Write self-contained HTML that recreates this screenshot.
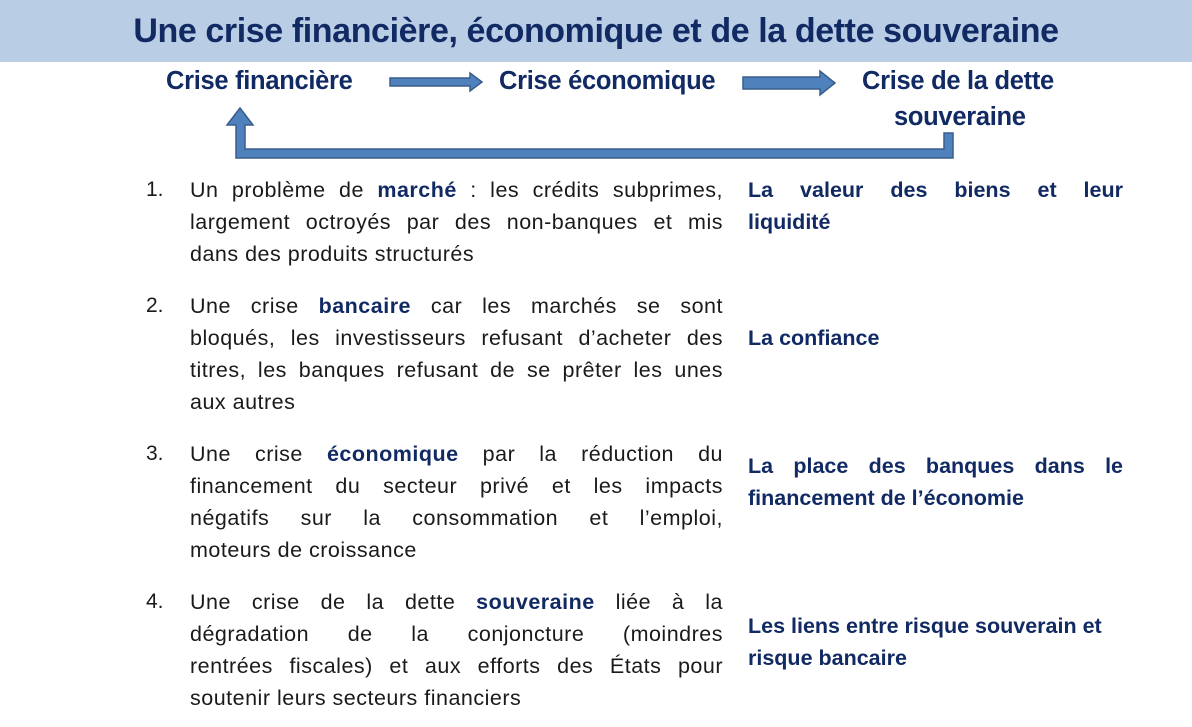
<!DOCTYPE html>
<html><head><meta charset="utf-8"><style>
body{margin:0;width:1192px;height:727px;background:#fff;position:relative;overflow:hidden;font-family:"Liberation Sans",sans-serif;color:#0d1f4d}
.hdr{position:absolute;left:0;top:0;width:1192px;height:62px;background:#b9cde5}
.title{position:absolute;left:0;width:1192px;top:12px;text-align:center;font-weight:bold;font-size:34px;color:#112a63;letter-spacing:-0.4px}
.h{position:absolute;font-weight:bold;font-size:25.5px;color:#112a63;letter-spacing:-0.3px}
.l{position:absolute;font-size:21.5px;letter-spacing:0.5px;color:#1a1a1a;left:190px;width:533px;height:32px;line-height:32px;white-space:nowrap}
.j{text-align:justify;text-align-last:justify}
.n{position:absolute;left:146px;font-size:21px;color:#1a1a1a;line-height:32px}
.r{position:absolute;left:748px;width:375px;font-size:21.5px;font-weight:bold;color:#112a63;line-height:32px;white-space:nowrap}
b{color:#112a63}
</style></head><body>
<div class="hdr"></div>
<div class="title">Une crise financière, économique et de la dette souveraine</div>
<div class="h" style="left:166px;top:67px">Crise financière</div>
<div class="h" style="left:499px;top:67px">Crise économique</div>
<div class="h" style="left:862px;top:67px">Crise de la dette</div>
<div class="h" style="left:894px;top:103px">souveraine</div>
<svg width="1192" height="727" style="position:absolute;left:0;top:0">
<g fill="#4f81bd" stroke="#385d8a" stroke-width="1.5">
<polygon points="390,78 470,78 470,73 482,82 470,91 470,86 390,86"/>
<polygon points="743,77 820,77 820,71 835,83 820,95 820,89 743,89"/>
<polygon points="236,158 953,158 953,133 944,133 944,149 245,149 245,125 253,125 240,108 227,125 236,125"/>
</g></svg>

<div class="n" style="top:174px">1.</div>
<div class="l j" style="top:174px">Un problème de <b>marché</b> : les crédits subprimes,</div>
<div class="l j" style="top:206px">largement octroyés par des non-banques et mis</div>
<div class="l" style="top:238px">dans des produits structurés</div>
<div class="r j" style="top:174px">La valeur des biens et leur</div>
<div class="r" style="top:206px">liquidité</div>

<div class="n" style="top:290px">2.</div>
<div class="l j" style="top:290px">Une crise <b>bancaire</b> car les marchés se sont</div>
<div class="l j" style="top:322px">bloqués, les investisseurs refusant d’acheter des</div>
<div class="l j" style="top:354px">titres, les banques refusant de se prêter les unes</div>
<div class="l" style="top:386px">aux autres</div>
<div class="r" style="top:322px">La confiance</div>

<div class="n" style="top:438px">3.</div>
<div class="l j" style="top:438px">Une crise <b>économique</b> par la réduction du</div>
<div class="l j" style="top:470px">financement du secteur privé et les impacts</div>
<div class="l j" style="top:502px">négatifs sur la consommation et l’emploi,</div>
<div class="l" style="top:534px">moteurs de croissance</div>
<div class="r j" style="top:450px">La place des banques dans le</div>
<div class="r" style="top:482px">financement de l’économie</div>

<div class="n" style="top:586px">4.</div>
<div class="l j" style="top:586px">Une crise de la dette <b>souveraine</b> liée à la</div>
<div class="l j" style="top:618px">dégradation de la conjoncture (moindres</div>
<div class="l j" style="top:650px">rentrées fiscales) et aux efforts des États pour</div>
<div class="l" style="top:682px">soutenir leurs secteurs financiers</div>
<div class="r" style="top:610px">Les liens entre risque souverain et</div>
<div class="r" style="top:642px">risque bancaire</div>
</body></html>
